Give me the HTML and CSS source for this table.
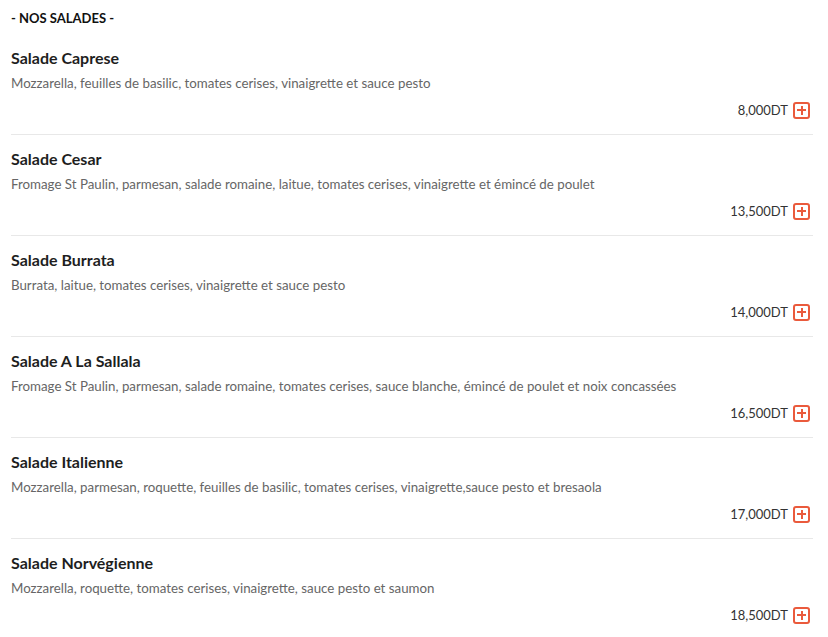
FILE: index.html
```html
<!DOCTYPE html>
<html lang="fr">
<head>
  <meta charset="UTF-8" />
  <title>Nos salades</title>
  <link rel="stylesheet" href="styles.css">
</head>
<body>
  <div class="menu">
    <h2 class="category">- NOS SALADES -</h2>

    <div class="item">
      <h3>Salade Caprese</h3>
      <p class="desc">Mozzarella, feuilles de basilic, tomates cerises, vinaigrette et sauce pesto</p>
      <div class="price-row"><span class="price">8,000DT</span><span class="add"></span></div>
    </div>

    <div class="item">
      <h3>Salade Cesar</h3>
      <p class="desc">Fromage St Paulin, parmesan, salade romaine, laitue, tomates cerises, vinaigrette et émincé de poulet</p>
      <div class="price-row"><span class="price">13,500DT</span><span class="add"></span></div>
    </div>

    <div class="item">
      <h3>Salade Burrata</h3>
      <p class="desc">Burrata, laitue, tomates cerises, vinaigrette et sauce pesto</p>
      <div class="price-row"><span class="price">14,000DT</span><span class="add"></span></div>
    </div>

    <div class="item">
      <h3>Salade A La Sallala</h3>
      <p class="desc">Fromage St Paulin, parmesan, salade romaine, tomates cerises, sauce blanche, émincé de poulet et noix concassées</p>
      <div class="price-row"><span class="price">16,500DT</span><span class="add"></span></div>
    </div>

    <div class="item">
      <h3>Salade Italienne</h3>
      <p class="desc">Mozzarella, parmesan, roquette, feuilles de basilic, tomates cerises, vinaigrette,sauce pesto et bresaola</p>
      <div class="price-row"><span class="price">17,000DT</span><span class="add"></span></div>
    </div>

    <div class="item">
      <h3>Salade Norvégienne</h3>
      <p class="desc">Mozzarella, roquette, tomates cerises, vinaigrette, sauce pesto et saumon</p>
      <div class="price-row"><span class="price">18,500DT</span><span class="add"></span></div>
    </div>
  </div>
</body>
</html>
```

FILE: styles.css
```css
body {
  margin: 0;
  font-family: 'Lato', 'Noto Sans', sans-serif;
  background: #fff;
  color: #222;
}

.menu {
  width: 802px;
  padding: 8px 0 0 11px;
}

.category {
  margin: 0 0 6px;
  font-size: 13px;
  line-height: 20px;
  font-weight: 700;
  color: #111;
}

.item {
  padding: 14px 0 14px;
  border-bottom: 1px solid #e8e8e8;
}

.item h3 {
  margin: 0;
  font-size: 16px;
  line-height: 20px;
  font-weight: 700;
  color: #1e1e1e;
}

.desc {
  margin: 6px 0 0;
  font-size: 13.3px;
  line-height: 18px;
  color: #666;
}

.price-row {
  margin-top: 8px;
  height: 20px;
  display: flex;
  justify-content: flex-end;
  align-items: center;
  gap: 5px;
  padding-right: 3px;
}

.price {
  font-size: 13px;
  color: #333;
}

.add {
  width: 17px;
  height: 17px;
  box-sizing: border-box;
  border: 2px solid #ea5a3c;
  border-radius: 3px;
  position: relative;
}

.add::before,
.add::after {
  content: "";
  position: absolute;
  background: #ea5a3c;
}

.add::before {
  left: 2px;
  right: 2px;
  top: 5.5px;
  height: 2px;
}

.add::after {
  top: 2px;
  bottom: 2px;
  left: 5.5px;
  width: 2px;
}
```
